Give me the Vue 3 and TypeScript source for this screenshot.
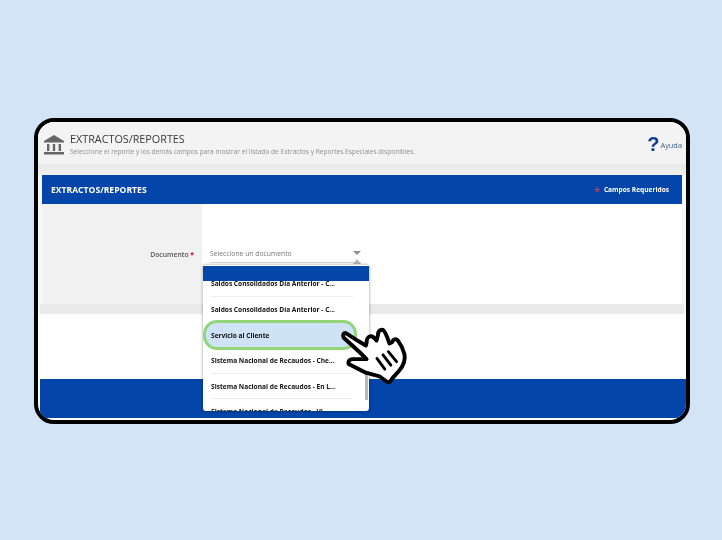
<template>
  <div class="stage">
    <div class="frame">
      <header class="top">
        <svg class="bank" viewBox="0 0 22 20" width="22" height="20">
          <path d="M11 0 L21 6 V7.5 H1 V6 Z" fill="#666" />
          <path d="M4 9 H6.4 V16 H4 Z M9.8 9 H12.2 V16 H9.8 Z M15.6 9 H18 V16 H15.6 Z" fill="#666" />
          <path d="M1 17 H21 V19.5 H1 Z" fill="#666" />
        </svg>
        <div class="titles">
          <div class="title">EXTRACTOS/REPORTES</div>
          <div class="sub">Seleccione el reporte y los demás campos para mostrar el listado de Extractos y Reportes Especiales disponibles.</div>
        </div>
        <div class="help">
          <span class="q">?</span>
          <span class="ayuda">Ayuda</span>
        </div>
      </header>

      <section class="page">
        <div class="strip"></div>
        <div class="bar">
          <span class="bar-title">EXTRACTOS/REPORTES</span>
          <span class="req"><i>*</i> Campos Requeridos</span>
        </div>
        <div class="form">
          <div class="label-col">
            <span>Documento <b>*</b></span>
          </div>
          <div class="field-col">
            <div class="select">
              <span>Seleccione un documento</span>
              <span class="arrow"></span>
            </div>
            <span class="caret"></span>
          </div>
        </div>
        <div class="band"></div>
      </section>

      <div class="gap"></div>
      <div class="foot"></div>

      <div class="dropdown">
        <div class="dd-head"></div>
        <div class="dd-list">
          <div v-for="item in items" :key="item.text" class="dd-item" :class="{ active: item.active }">
            {{ item.text }}
          </div>
        </div>
        <div class="scroll"></div>
      </div>

      <svg class="hand" viewBox="0 0 240 210" width="86" height="75">
        <path
          d="M30 45 C24 44 20 50 24 58 L68 98 L88 118 L48 118 C36 120 34 130 42 134 L86 156 L124 166 L146 182 C152 184 156 180 160 172 L178 152 C190 138 198 122 194 104 C190 88 182 74 176 66 C170 60 162 62 160 70 L152 74 C146 56 140 40 134 36 C126 34 120 40 120 50 L116 66 C110 58 106 54 100 54 C92 54 88 62 88 72 L86 80 L66 68 Z"
          fill="#fff"
          stroke="#000"
          stroke-width="11"
          stroke-linejoin="round"
        />
        <path d="M117 116 L139 146 M134 106 L156 135 M149 97 L172 125" stroke="#000" stroke-width="8" stroke-linecap="round" fill="none" />
      </svg>
    </div>
  </div>
</template>

<script setup lang="ts">
interface Item {
  text: string
  active?: boolean
}

const items: Item[] = [
  { text: 'Saldos Consolidados Día Anterior - C...' },
  { text: 'Saldos Consolidados Día Anterior - C...' },
  { text: 'Servicio al Cliente', active: true },
  { text: 'Sistema Nacional de Recaudos - Che...' },
  { text: 'Sistema Nacional de Recaudos - En L...' },
  { text: 'Sistema Nacional de Recaudos - Vi...' }
]
</script>

<style>
html,
body {
  margin: 0;
  background: #d3e4f7;
}
</style>

<style scoped>
.stage {
  width: 722px;
  height: 540px;
  padding-top: 118px;
  padding-left: 34px;
  box-sizing: border-box;
  background: #d3e4f7;
  font-family: "Open Sans", "Liberation Sans", sans-serif;
}

.frame {
  position: relative;
  width: 656px;
  height: 306px;
  box-sizing: border-box;
  border: 4px solid #000;
  border-radius: 20px;
  background: #fff;
  overflow: hidden;
  display: flex;
  flex-direction: column;
  will-change: transform;
}

.top {
  height: 42px;
  flex: none;
  background: #f3f3f3;
  display: flex;
  align-items: flex-start;
  padding: 11px 4px 0 5px;
  box-sizing: border-box;
}

.bank {
  flex: none;
  margin-top: 2px;
}

.titles {
  margin-left: 5px;
  flex: 1;
}

.title {
  font-size: 10.8px;
  line-height: 13px;
  margin-top: -1px;
  color: #3a3a3a;
}

.sub {
  font-size: 6.6px;
  line-height: 10px;
  margin-top: 2px;
  color: #8f8f8f;
  white-space: nowrap;
}

.help {
  display: flex;
  align-items: center;
  gap: 1px;
  margin-top: 1px;
}

.q {
  font-family: "Liberation Sans", sans-serif;
  font-size: 20px;
  line-height: 21px;
  font-weight: 700;
  color: #0b3d91;
}

.ayuda {
  font-size: 7.4px;
  margin-top: 1px;
  color: #3f608f;
}

.page {
  height: 150px;
  flex: none;
  background: #f7f7f7;
  padding: 0 4px;
  box-sizing: border-box;
  display: flex;
  flex-direction: column;
}

.strip {
  height: 11px;
  flex: none;
  margin: 0 -4px;
  background: linear-gradient(#e8e8e8, #f0f0f0);
}

.bar {
  height: 29px;
  flex: none;
  background: #0345a8;
  color: #fff;
  display: flex;
  align-items: center;
  justify-content: space-between;
  padding: 0 13px 0 9px;
  box-sizing: border-box;
}

.bar-title {
  font-size: 8.6px;
  font-weight: 700;
}

.req {
  font-size: 6.6px;
  font-weight: 700;
}

.req i {
  font-style: normal;
  color: #a8456a;
  font-size: 11px;
  line-height: 6px;
  margin-right: 2px;
  vertical-align: -3px;
}

.form {
  height: 100px;
  flex: none;
  display: flex;
  background: #fff;
}

.band {
  height: 10px;
  flex: none;
  margin: 0 -2px;
  background: #e9e9e9;
}

.label-col {
  width: 160px;
  flex: none;
  background: #f1f1f1;
  box-sizing: border-box;
  padding-top: 46px;
  padding-right: 8px;
  text-align: right;
  font-size: 6.8px;
  font-weight: 600;
  color: #555;
}

.label-col b {
  color: #e0103a;
}

.field-col {
  flex: 1;
  padding: 40px 0 0 8px;
  position: relative;
}

.select {
  width: 151px;
  height: 19px;
  display: flex;
  align-items: center;
  justify-content: space-between;
  box-sizing: border-box;
  padding-right: 0;
  font-size: 6.8px;
  color: #777;
  border-bottom: 1px solid #d5d5d5;
}

.arrow {
  width: 0;
  height: 0;
  border-left: 4px solid transparent;
  border-right: 4px solid transparent;
  border-top: 4px solid #8f8f8f;
}

.caret {
  position: absolute;
  left: 151px;
  top: 55px;
  width: 0;
  height: 0;
  border-left: 4px solid transparent;
  border-right: 4px solid transparent;
  border-bottom: 5px solid #b5b5b5;
}

.gap {
  height: 65px;
  flex: none;
  background: #fff;
}

.foot {
  height: 39px;
  flex: none;
  margin: 0 0 0 2px;
  background: #0345a8;
}

.dropdown {
  position: absolute;
  left: 165px;
  top: 143px;
  width: 166px;
  height: 146px;
  background: #fff;
  border-radius: 0 0 3px 3px;
  box-shadow: 0 0 3px rgba(0, 0, 0, 0.45);
  overflow: hidden;
}

.dd-head {
  position: absolute;
  top: 1px;
  left: 0;
  right: 0;
  height: 15px;
  background: #0345a8;
  z-index: 1;
}

.dd-list {
  margin-top: 6px;
  padding: 0 8px 0 0;
}

.dd-item {
  height: 25.5px;
  line-height: 25.5px;
  margin-left: 8px;
  margin-right: 8px;
  font-size: 6.6px;
  font-weight: 700;
  color: #111;
  white-space: nowrap;
  border-bottom: 1px solid #eee;
  box-sizing: border-box;
}

.dd-item.active {
  margin: -2px 4px -2px 0;
  height: 30px;
  line-height: 25px;
  background: #cfe3f6;
  border: 3px solid #93d67a;
  border-radius: 14px;
  padding-left: 5px;
  position: relative;
}

.scroll {
  position: absolute;
  right: 1px;
  top: 90px;
  width: 3px;
  height: 45px;
  background: #b8b8b8;
}

.hand {
  position: absolute;
  left: 297px;
  top: 195px;
}
</style>
